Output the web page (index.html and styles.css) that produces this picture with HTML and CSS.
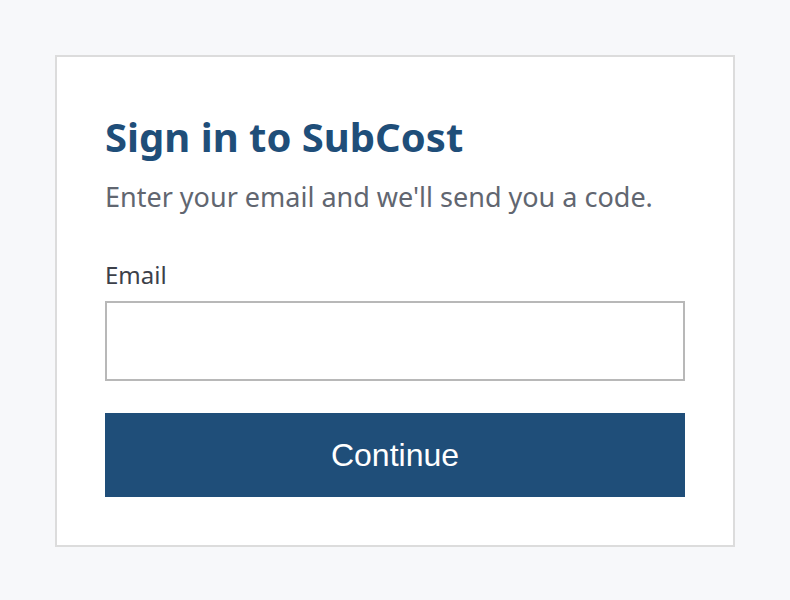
FILE: index.html
```html
<!DOCTYPE html>
<html lang="en">

<head>
    <meta charset="UTF-8">
    <meta name="viewport" content="width=device-width, initial-scale=1.0">
    <title>Sign in - SubCost</title>
    <link rel="stylesheet" href="styles.css">
</head>

<body>
    <div class="card">
        <h1 class="title">Sign in to SubCost</h1>
        <p class="subtitle">Enter your email and we'll send you a code.</p>
        <form class="login-form" onsubmit="return false">
            <label for="email" class="label">Email</label>
            <input type="email" id="email" class="email-input">
            <button type="submit" class="continue">Continue</button>
        </form>
    </div>
</body>

</html>
```

FILE: styles.css
```css
body {
    margin: 0;
    padding: 55px;
    background-color: #f7f8fa;
    font-family: "Noto Sans", "Open Sans", sans-serif;
}

.card {
    width: 580px;
    padding: 48px;
    background-color: white;
    border: 2px solid #dcdcdc;
}

.title {
    margin: 8px 0 0;
    font-size: 40px;
    line-height: 48px;
    font-weight: bold;
    color: #1f4e79;
}

.subtitle {
    margin: 19px 0 0;
    font-size: 27px;
    line-height: 34px;
    color: #616670;
}

.login-form {
    display: flex;
    flex-direction: column;
    margin-top: 45px;
}

.label {
    font-size: 24px;
    line-height: 32px;
    color: #3c4049;
    margin-bottom: 10px;
}

.email-input {
    height: 80px;
    box-sizing: border-box;
    border: 2px solid #b8b8b8;
    padding: 0 16px;
    font-size: 22px;
    margin: 0;
}

.continue {
    margin-top: 32px;
    height: 84px;
    border: none;
    background-color: #1f4e79;
    color: white;
    font-family: "Liberation Sans", Arial, sans-serif;
    font-size: 32px;
    cursor: pointer;
}
```
